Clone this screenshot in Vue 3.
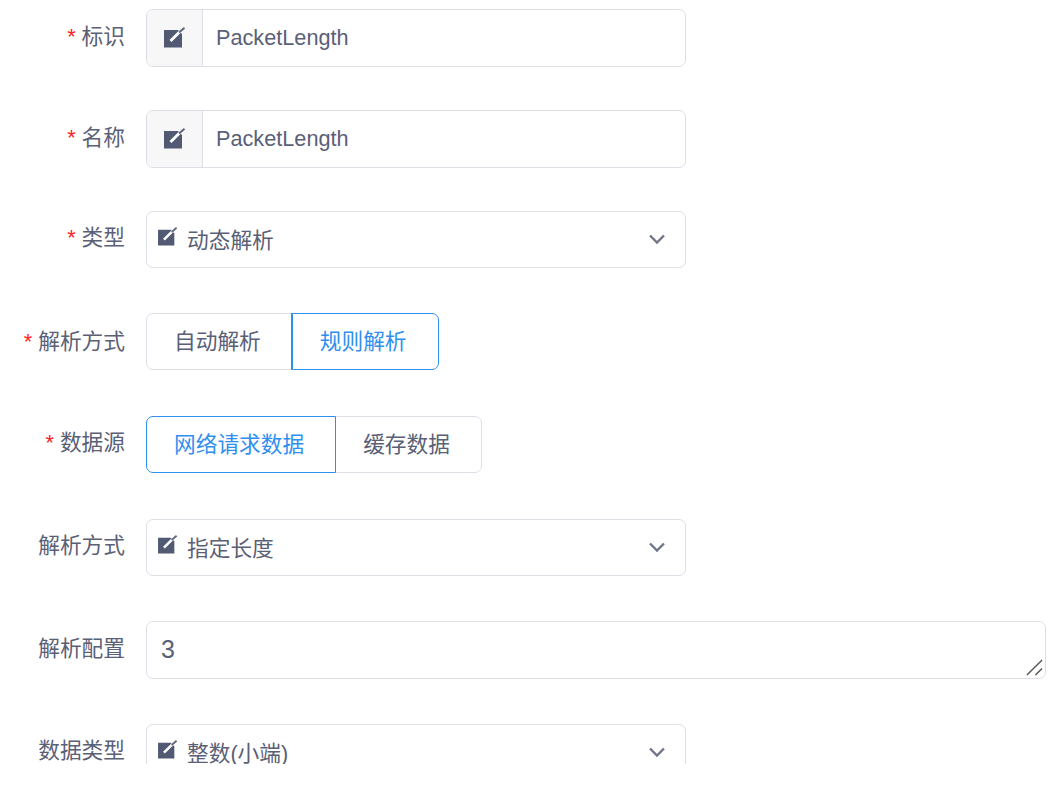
<template>
  <div class="form">
    <div v-for="row in rows" :key="row.label + row.value" class="row" :class="row.cls">
      <label class="label"><span v-if="row.required" class="star">*</span>{{ row.label }}</label>

      <div v-if="row.type === 'input'" class="input">
        <span class="prepend">
          <svg class="icon" viewBox="0 0 22 21"><path d="M0 3h14l4 4v13.5H0z" /><path class="pen" d="M6.5 14 16 4.5" /><path class="tip" d="M15 5.5 20.5.8" /></svg>
        </span>
        <span class="value">{{ row.value }}</span>
      </div>

      <div v-else-if="row.type === 'select'" class="select">
        <svg class="icon small" viewBox="0 0 22 21"><path d="M0 3h14l4 4v13.5H0z" /><path class="pen" d="M6.5 14 16 4.5" /><path class="tip" d="M15 5.5 20.5.8" /></svg>
        <span class="select-value">{{ row.value }}</span>
        <svg class="arrow" viewBox="0 0 18 12"><path d="M2 2.5 9 9.5 16 2.5" /></svg>
      </div>

      <div v-else-if="row.type === 'radio'" class="radios">
        <span v-for="opt in row.options" :key="opt" class="radio" :class="{ active: opt === row.value }">{{ opt }}</span>
      </div>

      <div v-else class="textarea">
        {{ row.value }}
        <svg class="resize" viewBox="0 0 18 18"><path d="M1 17 17 1M10 17l7-7" /></svg>
      </div>
    </div>
  </div>
</template>

<script setup>
const rows = [
  { label: "标识", required: true, type: "input", value: "PacketLength", cls: "h-input" },
  { label: "名称", required: true, type: "input", value: "PacketLength", cls: "h-input" },
  { label: "类型", required: true, type: "select", value: "动态解析", cls: "h-select" },
  { label: "解析方式", required: true, type: "radio", value: "规则解析", options: ["自动解析", "规则解析"], cls: "h-radio low" },
  { label: "数据源", required: true, type: "radio", value: "网络请求数据", options: ["网络请求数据", "缓存数据"], cls: "h-radio" },
  { label: "解析方式", type: "select", value: "指定长度", cls: "h-select" },
  { label: "解析配置", type: "textarea", value: "3", cls: "h-radio area" },
  { label: "数据类型", type: "select", value: "整数(小端)", cls: "h-select" },
];
</script>

<style>
html,
body {
  background: #fff;
}
</style>

<style scoped>
.form {
  height: 764px;
  overflow: hidden;
  padding-top: 9px;
  box-sizing: border-box;
  font-family: "Liberation Sans", "Noto Sans CJK SC", sans-serif;
  font-size: 21.7px;
  color: #5a6076;
}

.row {
  display: flex;
  align-items: flex-start;
  height: 58px;
  gap: 21px;
}

.h-input {
  margin-bottom: 43px;
}

.h-select {
  margin-bottom: 44px;
}

.h-radio {
  margin-bottom: 45px;
}

.label {
  width: 125px;
  flex: none;
  text-align: right;
  line-height: 54px;
  white-space: nowrap;
}

.h-input .label,
.area .label {
  line-height: 56px;
}

.low .label {
  line-height: 58px;
}

.star {
  color: #f22;
  margin-right: 6px;
}

.input,
.select {
  width: 540px;
  height: 58px;
  box-sizing: border-box;
  border: 1px solid #dcdfe6;
  border-radius: 7px;
  display: flex;
  align-items: center;
}

.select {
  height: 57px;
}

.prepend {
  width: 56px;
  height: 100%;
  flex: none;
  box-sizing: border-box;
  background: #f7f7f8;
  border-right: 1px solid #dcdfe6;
  border-radius: 7px 0 0 7px;
  display: flex;
  align-items: center;
  justify-content: center;
}

.value {
  padding-left: 13px;
}

.icon {
  width: 22px;
  height: 21px;
  fill: #515a72;
  margin-top: -2px;
}

.icon .pen {
  fill: none;
  stroke: #fff;
  stroke-width: 2.8;
}

.icon .tip {
  fill: none;
  stroke: #5f667d;
  stroke-width: 2;
}

.icon.small {
  width: 20px;
  height: 19px;
  margin: -6px 0 0 11px;
}

.select-value {
  margin-left: 9px;
  padding-bottom: 3px;
}

.arrow {
  width: 18px;
  height: 12px;
  margin: -2px 19px 0 auto;
  fill: none;
  stroke: #70758a;
  stroke-width: 2.4;
}

.radios {
  display: flex;
}

.radio {
  height: 57px;
  box-sizing: border-box;
  padding: 0 31px 0 27px;
  line-height: 55px;
  border: 1px solid #dcdfe6;
  margin-left: -1px;
  white-space: nowrap;
}

.radio:first-child {
  margin-left: 0;
  border-radius: 7px 0 0 7px;
}

.radio:last-child {
  border-radius: 0 7px 7px 0;
}

.radio.active {
  color: #2f8ff0;
  border-color: #2f8ff0;
  position: relative;
}

.radio.active:last-child {
  box-shadow: -1px 0 0 #2f8ff0;
}

.textarea {
  position: relative;
  flex: 1;
  margin-right: 2px;
  height: 58px;
  box-sizing: border-box;
  border: 1px solid #dcdfe6;
  border-radius: 7px;
  padding-left: 14px;
  font-size: 25px;
  line-height: 54px;
}

.resize {
  position: absolute;
  right: 2px;
  bottom: 2px;
  width: 17px;
  height: 17px;
  fill: none;
  stroke: #555;
  stroke-width: 1.5;
}
</style>
